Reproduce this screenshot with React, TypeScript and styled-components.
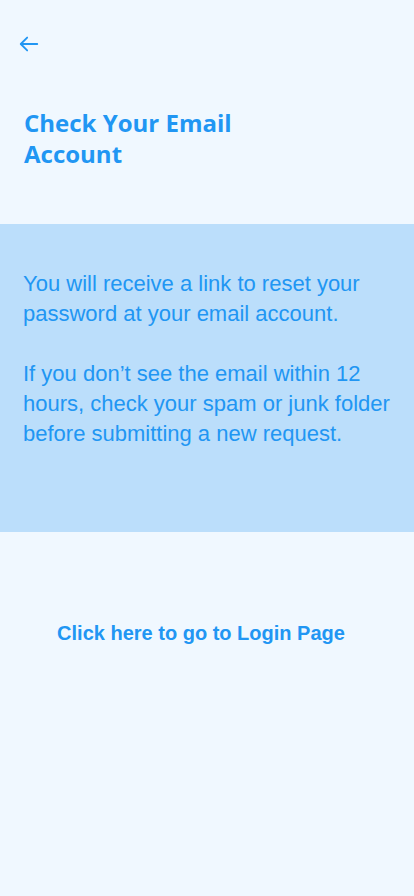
import styled, { createGlobalStyle } from 'styled-components';

const Global = createGlobalStyle`
  html, body {
    margin: 0;
    padding: 0;
    background: #f0f8ff;
  }
  #root {
    min-height: 100vh;
  }
`;

const Page = styled.div`
  min-height: 896px;
  background: #f0f8ff;
  color: #2196f3;
  display: flex;
  flex-direction: column;
`;

const Header = styled.header`
  padding: 33px 24px 0 18px;
`;

const BackButton = styled.button`
  display: flex;
  align-items: center;
  justify-content: center;
  width: 22px;
  height: 22px;
  padding: 0;
  border: none;
  background: none;
  color: #2196f3;
  cursor: pointer;
`;

const Title = styled.h1`
  margin: 52px 0 0 6px;
  max-width: 240px;
  font-family: "Open Sans", "Liberation Sans", sans-serif;
  font-weight: 700;
  font-size: 24px;
  line-height: 31px;
`;

const InfoPanel = styled.section`
  margin-top: 55px;
  height: 308px;
  box-sizing: border-box;
  background: #bbdefb;
  padding: 45px 20px 0 23px;
  font-family: "Liberation Sans", Arial, sans-serif;
  font-size: 22px;
  line-height: 30px;
`;

const Para = styled.p`
  margin: 0 0 30px;
`;

const Footer = styled.div`
  display: flex;
  justify-content: center;
  padding: 90px 12px 0 0;
`;

const LoginLink = styled.a`
  font-family: "Liberation Sans", Arial, sans-serif;
  font-weight: 700;
  font-size: 20px;
  color: #2196f3;
  text-decoration: none;
  cursor: pointer;
`;

const App = () => {
  return (
    <Page>
      <Global />
      <Header>
        <BackButton aria-label="Back">
          <svg width="22" height="22" viewBox="0 0 24 24" fill="none" stroke="currentColor" strokeWidth="2" strokeLinecap="round" strokeLinejoin="round">
            <path d="M21 12H4" />
            <path d="M10 5l-7 7 7 7" />
          </svg>
        </BackButton>
        <Title>Check Your Email Account</Title>
      </Header>
      <InfoPanel>
        <Para>You will receive a link to reset your password at your email account.</Para>
        <Para>If you don’t see the email within 12 hours, check your spam or junk folder before submitting a new request.</Para>
      </InfoPanel>
      <Footer>
        <LoginLink>Click here to go to Login Page</LoginLink>
      </Footer>
    </Page>
  );
};

export default App;
